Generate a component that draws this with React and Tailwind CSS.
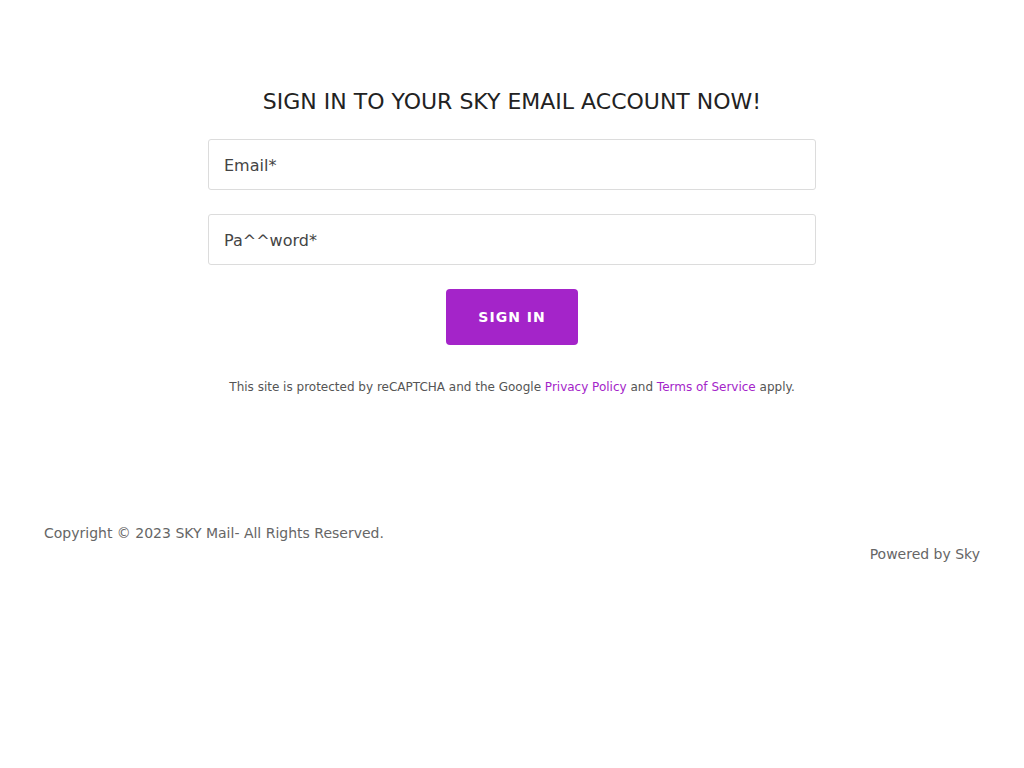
export default function App() {
  return (
    <div className="min-h-screen bg-white" style={{ fontFamily: '"DejaVu Sans", sans-serif' }}>
      <div className="flex flex-col items-center pt-[88px]">
        <h1 className="text-[22px] leading-[28px] text-[#222] m-0">SIGN IN TO YOUR SKY EMAIL ACCOUNT NOW!</h1>
        <div className="mt-[23px] w-[608px] flex flex-col gap-[24px]">
          <div className="h-[51px] border border-[#dcdcdc] rounded-[3px] flex items-center px-[15px] pt-[2px] text-[16px] text-[#444]">Email*</div>
          <div className="h-[51px] border border-[#dcdcdc] rounded-[3px] flex items-center px-[15px] pt-[2px] text-[16px] text-[#444]">Pa^^word*</div>
        </div>
        <button className="mt-[24px] w-[132px] h-[56px] rounded-[4px] bg-[#a424c9] text-white text-[14px] font-bold tracking-[1px] flex items-center justify-center">SIGN IN</button>
        <p className="mt-[34px] text-[12px] leading-[16px] text-[#555]">
          This site is protected by reCAPTCHA and the Google <span className="text-[#a424c9]">Privacy Policy</span> and <span className="text-[#a424c9]">Terms of Service</span> apply.
        </p>
      </div>
      <div className="mt-[128px] px-[44px] flex justify-between items-start text-[14px] text-[#666]">
        <div className="leading-[20px]">Copyright © 2023 SKY Mail- All Rights Reserved.</div>
        <div className="leading-[20px] mt-[21px]">Powered by Sky</div>
      </div>
    </div>
  );
}
